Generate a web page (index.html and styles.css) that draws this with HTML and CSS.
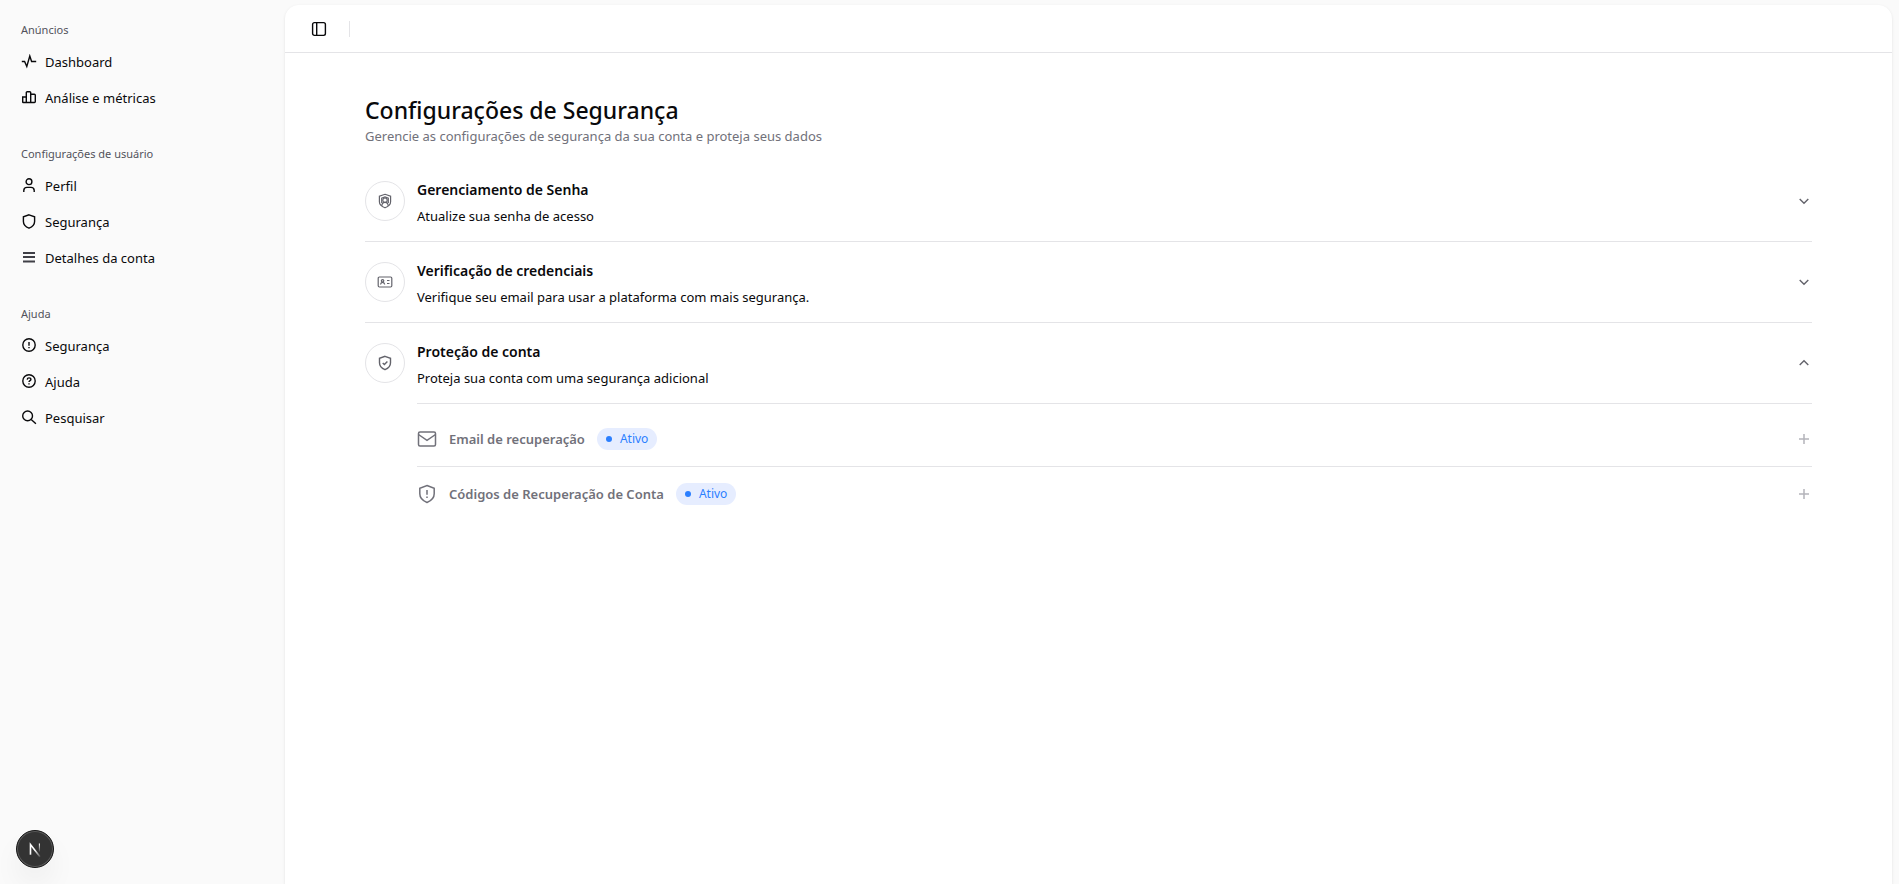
FILE: index.html
```html
<!DOCTYPE html>
<html lang="pt-BR">
<head>
<meta charset="utf-8">
<meta name="viewport" content="width=device-width, initial-scale=1">
<title>Configurações de Segurança</title>
<link rel="stylesheet" href="styles.css">
</head>
<body>
<div class="app">
  <nav class="sidebar" aria-label="Navegação">
    <section class="group">
      <h2 class="group-label">Anúncios</h2>
      <a class="nav-item" href="#dashboard"><svg class="icon" viewBox="0 0 16 16"><path d="M.8 7.500h2.800l2.200 5L8.800 2l1.800 5.500h4.600"/></svg>Dashboard</a>
      <a class="nav-item" href="#metricas"><svg class="icon" viewBox="0 0 16 16"><path d="M1.700 7h3.600v5.500H2.200a.5.5 0 0 1-.5-.5zM5.300 12.500V2.600c0-.5.4-.9.900-.9h2.600c.5 0 .9.400.9.900v9.900zM9.700 4.300h3.700c.5 0 .9.400.9.900v6.400c0 .5-.4.900-.9.900H9.700"/></svg>Análise e métricas</a>
    </section>
    <section class="group">
      <h2 class="group-label">Configurações de usuário</h2>
      <a class="nav-item" href="#perfil"><svg class="icon" viewBox="0 0 16 16"><circle cx="8" cy="3.700" r="2.900"/><path d="M2.800 14v-1.500a3.200 3.200 0 0 1 3.200-3.100h4a3.200 3.200 0 0 1 3.200 3.100V14"/></svg>Perfil</a>
      <a class="nav-item" href="#seguranca"><svg class="icon" viewBox="0 0 16 16"><path d="M8 .8l5.600 2v4.700c0 3.200-2.100 5.300-5.600 6.700-3.500-1.400-5.600-3.500-5.600-6.700V2.800z"/></svg>Segurança</a>
      <a class="nav-item" href="#conta"><svg class="icon icon-menu" viewBox="0 0 16 16"><path d="M2 3h12M2 7h12M2 11.500h12"/></svg>Detalhes da conta</a>
    </section>
    <section class="group">
      <h2 class="group-label">Ajuda</h2>
      <a class="nav-item" href="#ajuda-seguranca"><svg class="icon" viewBox="0 0 16 16"><circle cx="8" cy="7" r="6.200"/><path d="M8 4v3.700M8 9v1.200"/></svg>Segurança</a>
      <a class="nav-item" href="#ajuda"><svg class="icon" viewBox="0 0 16 16"><circle cx="8" cy="7" r="6.200"/><path d="M6.200 5.600C6.300 4.400 7 3.900 8 3.900s1.900.6 1.900 1.600C9.900 6.700 8 6.700 8 8.100M8 9.300v1.200"/></svg>Ajuda</a>
      <a class="nav-item" href="#pesquisar"><svg class="icon" viewBox="0 0 16 16"><circle cx="6.600" cy="5.900" r="4.900"/><path d="M10.200 9.500l4.700 4.300"/></svg>Pesquisar</a>
    </section>
  </nav>

  <main class="panel">
    <header class="topbar">
      <button class="toggle" type="button" aria-label="Alternar barra lateral"><svg class="icon" viewBox="0 0 16 16"><rect x="1.600" y="1.600" width="12.800" height="12.800" rx="1.800"/><path d="M5.700 1.600v12.800"/></svg></button>
      <span class="divider"></span>
    </header>
    <div class="content">
      <h1 class="title">Configurações de Segurança</h1>
      <p class="subtitle">Gerencie as configurações de segurança da sua conta e proteja seus dados</p>

      <button class="row" type="button" aria-expanded="false">
        <span class="badge-icon"><svg class="icon icon-thin" viewBox="0 0 16 16"><path d="M8 1.300l5.600 1.900v5.500c0 2.500-1.600 4.500-5.600 6.100-4-1.600-5.600-3.600-5.600-6.100V3.200z"/><circle cx="8" cy="7.200" r="2.200"/><path d="M4.900 12.800c0-2.200 1.100-3.400 3.100-3.400s3.100 1.200 3.100 3.400M4.700 10V5.200L8 4l3.300 1.200V10"/></svg></span>
        <span class="row-text"><span class="row-title">Gerenciamento de Senha</span><span class="row-desc">Atualize sua senha de acesso</span></span>
        <svg class="icon chevron" viewBox="0 0 16 16"><path d="M3.700 6l4.300 4.300L12.300 6"/></svg>
      </button>
      <button class="row" type="button" aria-expanded="false">
        <span class="badge-icon"><svg class="icon icon-thin" viewBox="0 0 16 16"><rect x="1.200" y="3" width="13.600" height="10" rx="1.200"/><circle cx="5.600" cy="6.800" r="1.200"/><path d="M3.500 10.500c.2-1.500.9-2.100 2.100-2.100s1.900.6 2.100 2.100M10 6.500h2.500M10 9.500h2.500"/></svg></span>
        <span class="row-text"><span class="row-title">Verificação de credenciais</span><span class="row-desc">Verifique seu email para usar a plataforma com mais segurança.</span></span>
        <svg class="icon chevron" viewBox="0 0 16 16"><path d="M3.700 6l4.300 4.300L12.300 6"/></svg>
      </button>
      <button class="row row-open" type="button" aria-expanded="true">
        <span class="badge-icon"><svg class="icon" viewBox="0 0 16 16"><path d="M8 1.300l5.500 2v4.500c0 3.300-2 5.500-5.500 6.900-3.500-1.400-5.500-3.600-5.500-6.900V3.300z"/><path d="M5.700 8l1.700 1.600 3-3"/></svg></span>
        <span class="row-text"><span class="row-title">Proteção de conta</span><span class="row-desc">Proteja sua conta com uma segurança adicional</span></span>
        <svg class="icon chevron" viewBox="0 0 16 16"><path d="M3.700 10L8 5.700l4.300 4.300"/></svg>
      </button>

      <div class="sublist">
        <button class="subrow" type="button">
          <svg class="icon icon-lg" viewBox="0 0 20 20"><rect x="1.500" y="3" width="17" height="14" rx="1.500"/><path d="M1.500 5.500L10 11.300l8.500-5.800"/></svg>
          <span>Email de recuperação</span>
          <span class="status">Ativo</span>
          <svg class="icon plus" viewBox="0 0 16 16"><path d="M3 8h10M8 3v10"/></svg>
        </button>
        <button class="subrow" type="button">
          <svg class="icon icon-lg" viewBox="0 0 20 20"><path d="M10 1.500l7.200 2.700v5.600c0 4.200-2.700 6.900-7.200 8.700-4.500-1.800-7.200-4.500-7.200-8.700V4.200z"/><path d="M10 6v4.800M10 12.600v1.500"/></svg>
          <span>Códigos de Recuperação de Conta</span>
          <span class="status">Ativo</span>
          <svg class="icon plus" viewBox="0 0 16 16"><path d="M3 8h10M8 3v10"/></svg>
        </button>
      </div>
    </div>
  </main>
</div>

<button class="dev-button" type="button" aria-label="Ferramentas de desenvolvimento">
  <svg class="dev-logo" viewBox="0 0 40 40">
    <defs>
      <linearGradient id="stem" gradientUnits="userSpaceOnUse" x1="0" y1="14" x2="0" y2="24"><stop offset="0" stop-color="#fff"/><stop offset="1" stop-color="#fff" stop-opacity="0"/></linearGradient>
      <linearGradient id="slant" gradientUnits="userSpaceOnUse" x1="20" y1="21" x2="26" y2="29"><stop offset="0" stop-color="#fff"/><stop offset="1" stop-color="#fff" stop-opacity=".1"/></linearGradient>
    </defs>
    <path d="M15 26.500V15l10.500 13.500" stroke="url(#slant)"/>
    <path d="M24.300 14h1.200v9h-1.200z" fill="url(#stem)"/>
  </svg>
</button>
</body>
</html>
```
FILE: styles.css
```css
* { box-sizing: border-box; }

body {
  margin: 0;
  background: #fafafa;
  color: #09090b;
  font: 13px/20px "Segoe UI", "Noto Sans", "Open Sans", sans-serif;
}

h1, h2, p { margin: 0; }

button {
  padding: 0;
  border: 0;
  background: none;
  color: inherit;
  font: inherit;
  text-align: left;
  cursor: pointer;
}

.app { display: flex; min-height: 100vh; }

.sidebar {
  display: flex;
  flex-direction: column;
  flex: none;
  gap: 8px;
  width: 285px;
  padding: 6px 8px;
}

.group {
  display: flex;
  flex-direction: column;
  gap: 4px;
  padding: 8px 5px;
}

.group-label {
  height: 32px;
  margin-bottom: -4px;
  padding: 0 8px;
  color: #52525b;
  font-size: 11px;
  font-weight: 400;
  line-height: 32px;
}

.nav-item {
  display: flex;
  align-items: center;
  gap: 8px;
  height: 32px;
  padding: 0 8px;
  color: inherit;
  text-decoration: none;
}

.icon {
  flex: none;
  width: 16px;
  height: 16px;
  fill: none;
  stroke: currentColor;
  stroke-width: 1.4;
}

.icon-menu { stroke: #3f3f46; stroke-width: 2; }
.icon-thin { stroke-width: 1.2; }
.icon-lg { width: 20px; height: 20px; stroke-width: 1.5; }

.panel {
  flex: 1;
  min-width: 0;
  margin: 5px 7px 0 0;
  border-radius: 14px 14px 0 0;
  background: #fff;
  box-shadow: 0 1px 3px rgba(0, 0, 0, .1);
}

.topbar {
  display: flex;
  align-items: center;
  gap: 22px;
  height: 48px;
  padding: 0 26px;
  border-bottom: 1px solid #e4e4e7;
}

.toggle { display: flex; }
.divider { width: 1px; height: 16px; background: #e4e4e7; }

.content {
  display: flex;
  flex-direction: column;
  padding: 41px 80px;
}

.title { font-size: 23px; font-weight: 500; line-height: 32px; }
.subtitle { margin-bottom: 15px; color: #71717a; }

.row {
  display: flex;
  align-items: center;
  gap: 12px;
  height: 81px;
  border-bottom: 1px solid #e4e4e7;
}

.row-open { height: 80px; border-bottom: 0; }

.badge-icon {
  display: grid;
  place-items: center;
  flex: none;
  width: 40px;
  height: 40px;
  border: 1px solid #e4e4e7;
  border-radius: 50%;
  color: #63636b;
}

.row-text {
  display: flex;
  flex-direction: column;
  flex: 1;
  gap: 6px;
  padding-top: 3px;
}

.row-title { font-size: 14px; font-weight: 600; }
.chevron { color: #63636b; }

.sublist {
  margin-left: 52px;
  padding-top: 8px;
  border-top: 1px solid #e4e4e7;
}

.subrow {
  display: flex;
  align-items: center;
  gap: 12px;
  width: 100%;
  height: 55px;
  border-bottom: 1px solid #e4e4e7;
  color: #71717a;
  font-weight: 600;
}

.subrow:last-child { height: 54px; border-bottom: 0; }

.status {
  display: flex;
  align-items: center;
  gap: 8px;
  height: 22px;
  padding: 0 9px;
  border-radius: 11px;
  background: #e6edff;
  color: #2b7fff;
  font-size: 12px;
  font-weight: 400;
}

.status::before {
  width: 6px;
  height: 6px;
  border-radius: 50%;
  background: currentColor;
  content: "";
}

.plus { margin-left: auto; color: #b4b4ba; stroke-width: 1.5; }

.dev-button {
  position: fixed;
  bottom: 16px;
  left: 16px;
  width: 38px;
  height: 38px;
  border: 1px solid #171717;
  border-radius: 50%;
  background: #333;
  box-shadow: inset 0 0 0 1px #5c5c5c, 0 16px 32px -8px rgba(0, 0, 0, .14);
}

.dev-logo { display: block; width: 36px; height: 36px; fill: none; stroke-width: 1.8; }
```
